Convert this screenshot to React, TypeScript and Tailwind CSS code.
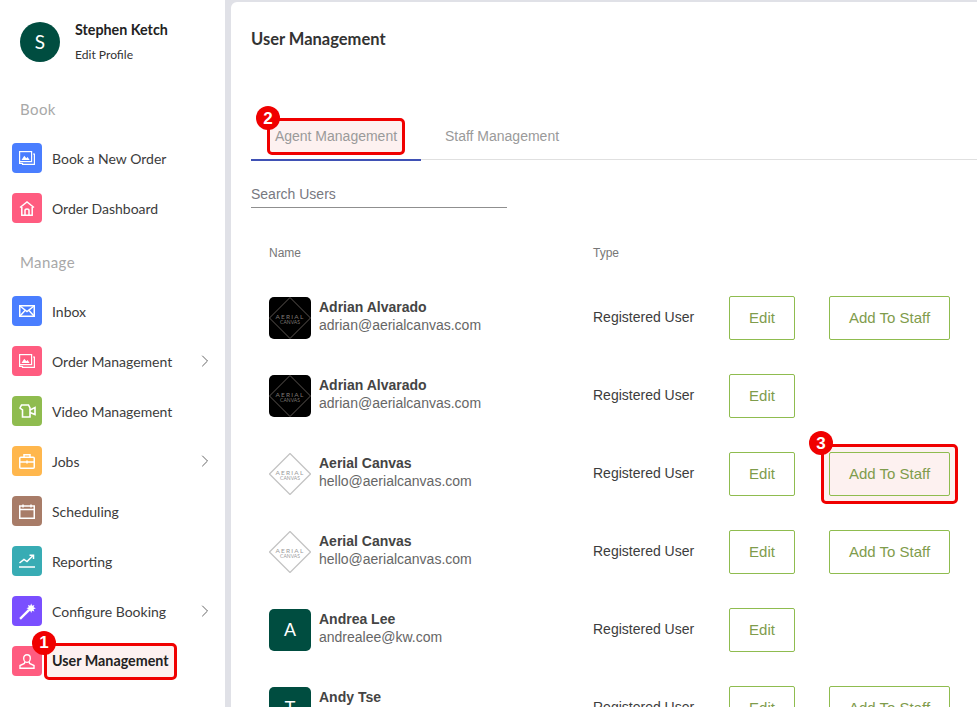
import { ChevronRight } from 'lucide-react'
import type { ReactNode } from 'react'

const ImagesIcon = () => (
  <svg viewBox="0 0 16 14" className="h-[14px] w-[16px]" fill="none" stroke="white" strokeWidth="1.2">
    <rect x="0.600" y="0.600" width="12" height="10" />
    <path d="M2.500 9l2.800-4.200 2 2.400 1.300-1.200 2 3z" fill="white" stroke="none" />
    <path d="M14 3h1.400v10.400H3.500v-1.500" />
    <path d="M0.600 10.600v1.800h2.900" />
  </svg>
)

const HomeIcon = () => (
  <svg viewBox="0 0 16 15" className="h-[15px] w-[16px]" fill="none" stroke="white" strokeWidth="1.500">
    <path d="M1 6.500L8 1l7 5.500" />
    <path d="M2.800 6v8.200h10.400V6" />
    <path d="M6 14.200V9.500c0-2 4-2 4 0v4.700" />
  </svg>
)

const MailIcon = () => (
  <svg viewBox="0 0 16 12" className="h-[12px] w-[16px]" fill="none" stroke="white" strokeWidth="1.500">
    <rect x="0.750" y="0.750" width="14.500" height="10.500" />
    <path d="M1 1l7 5.500L15 1M1 11l5-5.500M15 11l-5-5.500" />
  </svg>
)

const VideoIcon = () => (
  <svg viewBox="0 0 17 14" className="h-[14px] w-[17px]" fill="none" stroke="white" strokeWidth="1.600">
    <path d="M2.500 1h7l1.500 3v9H3.500V6L1 4z" />
    <path d="M11 6l5-2.500v7L11 8.500" />
  </svg>
)

const CaseIcon = () => (
  <svg viewBox="0 0 16 15" className="h-[15px] w-[16px]" fill="none" stroke="white" strokeWidth="1.500">
    <rect x="0.750" y="3.250" width="14.500" height="11" rx="1" />
    <path d="M5 3.250V0.800h6v2.450M0.750 8h14.500M8 6.500v3" />
  </svg>
)

const CalendarIcon = () => (
  <svg viewBox="0 0 16 15" className="h-[15px] w-[16px]" fill="none" stroke="white" strokeWidth="1.500">
    <rect x="0.750" y="2" width="14.500" height="12.250" />
    <path d="M0.750 5.500h14.500M4 0.500v3M12 0.500v3" />
  </svg>
)

const ChartIcon = () => (
  <svg viewBox="0 0 16 14" className="h-[14px] w-[16px]" fill="none" stroke="white" strokeWidth="1.500">
    <path d="M0 13h16" />
    <path d="M0.500 9L5 5.500l3 2 6-6" />
    <path d="M10.500 1.200H14.500V5" />
  </svg>
)

const WandIcon = () => (
  <svg viewBox="0 0 16 16" className="h-[17px] w-[17px]" fill="none" stroke="white">
    <path d="M1 15L9.500 6.500" strokeWidth="2.200" />
    <path d="M11.500 0.500l.8 2.200 2.200-.8-.8 2.200 2.200.9-2.200.9.800 2.200-2.200-.8-.8 2.200-.9-2.200-2.200.8.800-2.200-2.200-.9 2.200-.9-.8-2.200 2.200.8z" fill="white" stroke="none" />
  </svg>
)

const UserIcon = () => (
  <svg viewBox="0 0 16 15" className="h-[15px] w-[16px]" fill="none" stroke="white" strokeWidth="1.400">
    <path d="M8 0.800c2 0 3.300 1.400 3.300 3.400S10 8.400 8 8.400 4.700 6.200 4.700 4.200 6 0.800 8 0.800z" />
    <path d="M5.800 8l-.4 1.500L1 11.500v2.800h14v-2.800l-4.400-2L10.200 8" />
  </svg>
)

const AerialLogo = ({ dark }: { dark?: boolean }) => (
  <div className={`flex h-[42px] w-[42px] shrink-0 items-center justify-center rounded-[5px] ${dark ? 'bg-black' : 'bg-white'}`}>
    <svg viewBox="0 0 42 42" className="h-[42px] w-[42px]" fill="none">
      <path d="M21 0.500L41.500 21 21 41.500 0.500 21z" stroke={dark ? '#5a5551' : '#c4c4c4'} strokeWidth={dark ? 1 : 1.300} />
      <text x="21" y="21.500" textAnchor="middle" fontSize="6.500" letterSpacing="1.200" fill={dark ? '#7d7874' : '#9a9a9a'} fontFamily="Lato, sans-serif">AERIAL</text>
      <text x="21" y="27" textAnchor="middle" fontSize="5" fill={dark ? '#7d7874' : '#9a9a9a'} fontFamily="Lato, sans-serif">CANVAS</text>
    </svg>
  </div>
)

const Letter = ({ letter }: { letter: string }) => (
  <div className="flex h-[42px] w-[42px] shrink-0 items-center justify-center rounded-[5px] bg-[#004d40] text-[18px] text-white">
    {letter}
  </div>
)

// number bubble from the annotated screenshot
const Badge = ({ n, className }: { n: number; className: string }) => (
  <span className={`absolute z-10 flex h-6 w-6 items-center justify-center rounded-full bg-[#f00000] text-[17px] font-bold leading-none text-white font-['Liberation_Sans',sans-serif] ${className}`}>
    {n}
  </span>
)

const NavItem = ({ icon, color, label, arrow }: { icon: ReactNode; color: string; label: string; arrow?: boolean }) => (
  <div className="flex h-[50px] items-center pl-3 pr-[10px]">
    <div className={`flex h-[30px] w-[30px] shrink-0 items-center justify-center rounded-[4px] ${color}`}>{icon}</div>
    <span className="ml-[10px] flex-1 text-[14px] text-[#3c3c3c]">{label}</span>
    {arrow && <ChevronRight className="h-5 w-5 text-[#666]" strokeWidth={1.200} />}
  </div>
)

const users = [
  { name: 'Adrian Alvarado', email: 'adrian@aerialcanvas.com', avatar: <AerialLogo dark />, staff: true },
  { name: 'Adrian Alvarado', email: 'adrian@aerialcanvas.com', avatar: <AerialLogo dark />, staff: false },
  { name: 'Aerial Canvas', email: 'hello@aerialcanvas.com', avatar: <AerialLogo />, staff: true, highlight: true },
  { name: 'Aerial Canvas', email: 'hello@aerialcanvas.com', avatar: <AerialLogo />, staff: true },
  { name: 'Andrea Lee', email: 'andrealee@kw.com', avatar: <Letter letter="A" />, staff: false },
  { name: 'Andy Tse', email: 'andy@kw.com', avatar: <Letter letter="T" />, staff: true },
]

export default function App() {
  return (
    <div className="flex h-[707px] w-full overflow-hidden bg-[#e0e1e7] font-['Liberation_Sans',Arial,sans-serif]">
      {/* Sidebar */}
      <aside className="h-full w-[225px] shrink-0 bg-white font-['Lato',sans-serif]">
        <div className="flex items-start pl-5 pt-[22px]">
          <div className="flex h-10 w-10 items-center justify-center rounded-full bg-[#004d40] text-[19px] text-white">S</div>
          <div className="ml-[15px]">
            <div className="-mt-[1px] text-[14.300px] font-bold leading-[17px] text-[#222]">Stephen Ketch</div>
            <div className="mt-[9px] text-[12.100px] leading-[15px] text-[#333]">Edit Profile</div>
          </div>
        </div>

        <div className="mt-[37px] pl-5 text-[15px] leading-[20px] tracking-[0.4px] text-[#a8a8a8]">Book</div>
        <div className="mt-[14px]">
          <NavItem icon={<ImagesIcon />} color="bg-[#4a7eff]" label="Book a New Order" />
          <NavItem icon={<HomeIcon />} color="bg-[#ff5c80]" label="Order Dashboard" />
        </div>

        <div className="mt-[19px] pl-5 text-[15px] leading-[20px] tracking-[0.4px] text-[#a8a8a8]">Manage</div>
        <div className="mt-[14px]">
          <NavItem icon={<MailIcon />} color="bg-[#4a7eff]" label="Inbox" />
          <NavItem icon={<ImagesIcon />} color="bg-[#ff5c80]" label="Order Management" arrow />
          <NavItem icon={<VideoIcon />} color="bg-[#8fbc4f]" label="Video Management" />
          <NavItem icon={<CaseIcon />} color="bg-[#ffb74d]" label="Jobs" arrow />
          <NavItem icon={<CalendarIcon />} color="bg-[#a87c68]" label="Scheduling" />
          <NavItem icon={<ChartIcon />} color="bg-[#38acb4]" label="Reporting" />
          <NavItem icon={<WandIcon />} color="bg-[#7a4fff]" label="Configure Booking" arrow />
          <div className="relative flex h-[50px] items-center pl-3">
            <div className="flex h-[30px] w-[30px] shrink-0 items-center justify-center rounded-[4px] bg-[#ff5c80]"><UserIcon /></div>
            <span className="relative ml-[2px] flex h-[37px] w-[133px] items-center rounded-[5px] border-[3px] border-[#f00000] bg-[#fdf1f0] pl-[5px] text-[14.300px] font-bold text-[#222]">
              User Management
              <Badge n={1} className="-left-[15px] -top-[15px]" />
            </span>
          </div>
        </div>
      </aside>

      {/* Main */}
      <main className="ml-[6px] mt-[2px] flex-1 rounded-tl-[6px] bg-white">
        <h1 className="pl-5 pt-[27px] font-['Lato',sans-serif] text-[16.500px] font-bold leading-[20px] text-[#333]">User Management</h1>

        {/* Tabs */}
        <div className="ml-5 mt-[65px] flex h-[46px] border-b border-[#e0e0e0] text-[14px] text-[#9a9a9a]">
          <div className="relative flex h-[47px] w-[170px] items-center justify-center border-b-[2px] border-[#3f51b5]">
            <span className="relative flex h-[37px] w-[138px] items-center justify-center rounded-[5px] border-[3px] border-[#f00000] bg-[#fdf1f0]">
              Agent Management
              <Badge n={2} className="-left-[14px] -top-[15px]" />
            </span>
          </div>
          <div className="flex w-[162px] items-center justify-center">Staff Management</div>
        </div>

        <div className="ml-5 mt-[20px] h-7 w-[256px] border-b border-[#8f8f8f] text-[14px] leading-[29px] text-[#77787f]">Search Users</div>

        {/* Table */}
        <div className="ml-[38px] mt-[38px] flex h-[14px] text-[12px] leading-[14px] text-[#777]">
          <div className="w-[324px]">Name</div>
          <div>Type</div>
        </div>
        <div className="mt-[16px]">
          {users.map((u, i) => (
            <div key={i} className="ml-[38px] flex h-[78px] items-start pt-[21px]">
              <div className="flex w-[324px] items-center">
                {u.avatar}
                <div className="mb-[4px] ml-2">
                  <div className="text-[14px] font-bold leading-[18px] text-[#444]">{u.name}</div>
                  <div className="text-[14px] leading-[18px] text-[#666]">{u.email}</div>
                </div>
              </div>
              <div className="w-[136px] pt-[11px] text-[14px] leading-[18px] text-[#3c3c3c]">Registered User</div>
              <button className="-mt-[1px] h-[44px] w-[66px] rounded-[2px] border border-[#8fbc4f] text-[15px] text-[#7f9c4c]">Edit</button>
              {u.staff && (
                <div className="relative -mt-[1px] ml-[34px]">
                  {u.highlight && (
                    <div className="absolute -inset-x-[8px] -inset-y-[8px] rounded-[5px] border-[3px] border-[#f00000] bg-[#fdf1f0]">
                      <Badge n={3} className="-left-[15px] -top-[16px]" />
                    </div>
                  )}
                  <button className="relative h-[44px] w-[121px] rounded-[2px] border border-[#8fbc4f] text-[15px] text-[#7f9c4c]">Add To Staff</button>
                </div>
              )}
            </div>
          ))}
        </div>
      </main>
    </div>
  )
}
